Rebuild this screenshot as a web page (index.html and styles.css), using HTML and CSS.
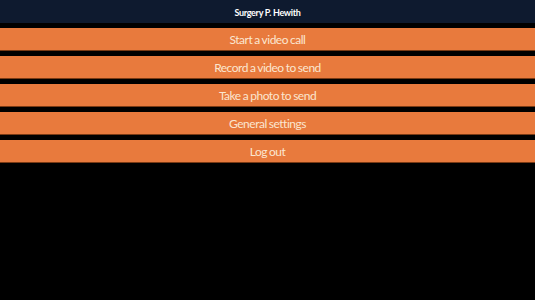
FILE: index.html
```html
<!DOCTYPE html>
<html>
<head>
<meta charset="utf-8">
<link rel="stylesheet" href="styles.css">
</head>
<body>
<header class="topbar"><span class="title">Surgery P. Hewith</span></header>
<nav class="menu">
  <button class="item">Start a video call</button>
  <button class="item">Record a video to send</button>
  <button class="item">Take a photo to send</button>
  <button class="item">General settings</button>
  <button class="item">Log out</button>
</nav>
</body>
</html>
```
FILE: styles.css
```css
html, body {
  margin: 0;
  padding: 0;
  background: #000;
  height: 100%;
}
body {
  font-family: Lato, "Noto Sans", sans-serif;
}
.topbar {
  height: 23px;
  background: #0e1a2f;
  display: flex;
  align-items: center;
  justify-content: center;
}
.title {
  color: #ffffff;
  font-size: 9px;
  font-weight: 700;
  letter-spacing: -0.3px;
  padding-top: 1px;
}
.menu {
  display: flex;
  flex-direction: column;
  gap: 5px;
  padding-top: 5px;
}
.item {
  height: 23px;
  margin: 0;
  padding: 0;
  border: none;
  border-bottom: 1px solid #7a3a14;
  background: #e87a3d;
  color: #fbe6d0;
  font-family: Lato, "Noto Sans", sans-serif;
  font-size: 12px;
  letter-spacing: -0.5px;
  word-spacing: -0.5px;
  display: flex;
  align-items: center;
  justify-content: center;
  width: 100%;
}
```
